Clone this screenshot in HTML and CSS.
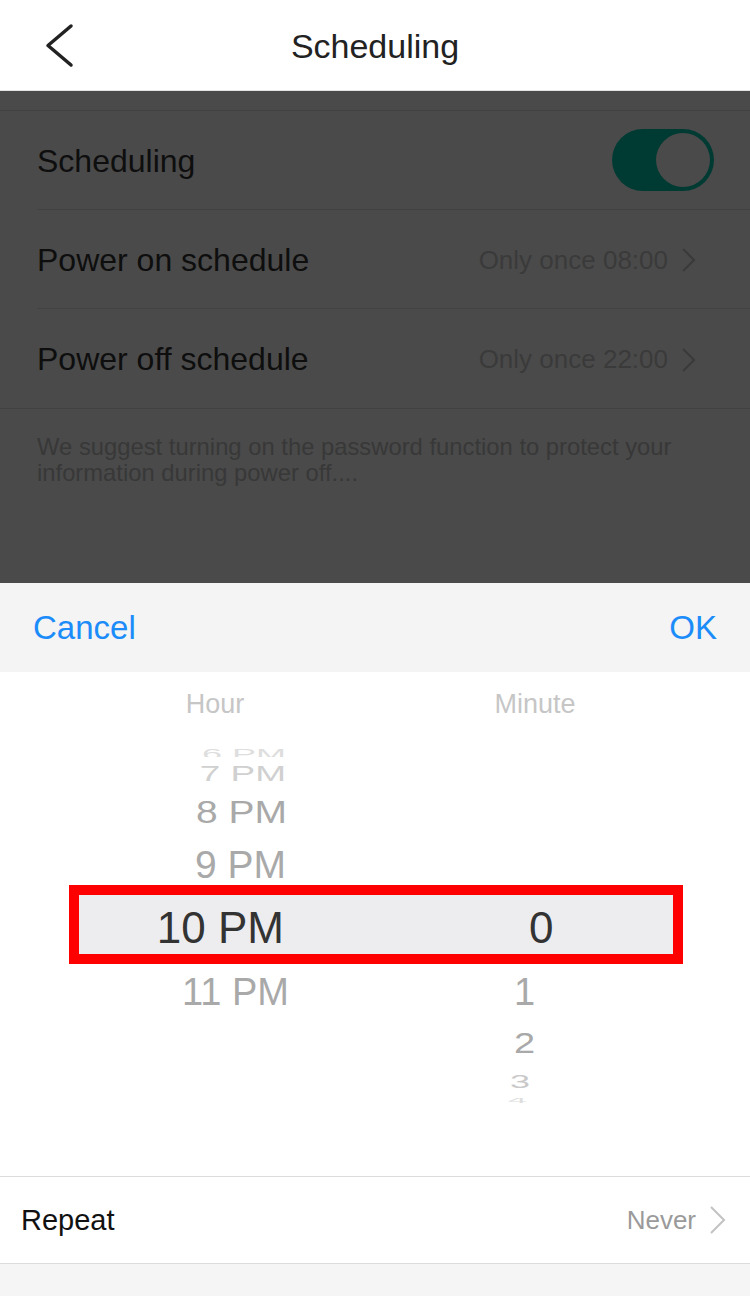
FILE: index.html
```html
<!DOCTYPE html>
<html lang="en">
<head>
  <meta charset="UTF-8" />
  <meta name="viewport" content="width=device-width, initial-scale=1.0"/>
  <title>Scheduling</title>
  <link rel="stylesheet" href="styles.css">
</head>
<body>
  <div class="screen">
    <header class="nav">
      <div class="nav-side">
        <svg class="back" width="32" height="46" viewBox="0 0 32 46">
          <path d="M27 3 L4 22.5 L27 42" fill="none" stroke="#222" stroke-width="3.5" stroke-linecap="round" stroke-linejoin="round"/>
        </svg>
      </div>
      <h1 class="nav-title">Scheduling</h1>
      <div class="nav-side"></div>
    </header>

    <!-- page under the dim layer -->
    <section class="dimmed">
      <div class="list">
        <div class="row">
          <span class="row-label">Scheduling</span>
          <span class="toggle"><span class="knob"></span></span>
        </div>
        <div class="row">
          <span class="row-label">Power on schedule</span>
          <span class="row-value">Only once 08:00
            <svg width="16" height="24" viewBox="0 0 16 24"><path d="M2 1 L13 12 L2 23" fill="none" stroke="#3a3a3a" stroke-width="2"/></svg>
          </span>
        </div>
        <div class="row last">
          <span class="row-label">Power off schedule</span>
          <span class="row-value">Only once 22:00
            <svg width="16" height="24" viewBox="0 0 16 24"><path d="M2 1 L13 12 L2 23" fill="none" stroke="#3a3a3a" stroke-width="2"/></svg>
          </span>
        </div>
      </div>
      <p class="hint">We suggest turning on the password function to protect your information during power off....</p>
    </section>

    <!-- time picker sheet -->
    <section class="sheet">
      <div class="toolbar">
        <button class="tool-btn">Cancel</button>
        <button class="tool-btn">OK</button>
      </div>

      <div class="picker">
        <div class="picker-labels">
          <span>Hour</span>
          <span>Minute</span>
        </div>

        <div class="wheel">
          <div class="wheel-row r6"><span class="h"><i class="sq s6">6 PM</i></span><span class="m"></span></div>
          <div class="wheel-row r7"><span class="h"><i class="sq s7">7 PM</i></span><span class="m"></span></div>
          <div class="wheel-row r8"><span class="h"><i class="sq s8">8 PM</i></span><span class="m"></span></div>
          <div class="wheel-row r9"><span class="h">9 PM</span><span class="m"></span></div>
          <div class="wheel-row selected"><span class="h">10 PM</span><span class="m zero">0</span></div>
          <div class="wheel-row r11"><span class="h">11 PM</span><span class="m">1</span></div>
          <div class="wheel-row r2"><span class="h"></span><span class="m"><i class="sq s2">2</i></span></div>
          <div class="wheel-row r3"><span class="h"></span><span class="m"><i class="sq s3">3</i></span></div>
          <div class="wheel-row r4"><span class="h"></span><span class="m"><i class="sq s4">4</i></span></div>
        </div>
      </div>

      <div class="repeat">
        <span class="repeat-label">Repeat</span>
        <span class="repeat-value">Never
          <svg width="18" height="28" viewBox="0 0 18 28"><path d="M2 1 L15 14 L2 27" fill="none" stroke="#c2c2c2" stroke-width="2"/></svg>
        </span>
      </div>
    </section>
  </div>
</body>
</html>
```

FILE: styles.css
```css
* {
  box-sizing: border-box;
}

body {
  margin: 0;
  font-family: 'Liberation Sans', Arial, sans-serif;
  background: #f5f5f5;
  color: #222;
}

.screen {
  width: 750px;
  height: 1296px;
  overflow: hidden;
  background: #f5f5f5;
}

/* nav bar */
.nav {
  height: 91px;
  background: #fff;
  border-bottom: 1px solid #e2e2e2;
  display: grid;
  grid-template-columns: 1fr auto 1fr;
  align-items: center;
}

.nav-side {
  display: flex;
  align-items: center;
  padding-left: 44px;
}

.back {
  display: block;
  margin-top: 1px;
}

.nav-title {
  margin: 0;
  padding-top: 2px;
  font-size: 34px;
  font-weight: normal;
  color: #222;
}

/* dimmed settings page */
.dimmed {
  height: 492px;
  background: #4a4a4a;
  padding-top: 19px;
}

.list {
  border-top: 1px solid #424242;
  border-bottom: 1px solid #424242;
}

.row {
  height: 99px;
  margin-left: 37px;
  padding-right: 36px;
  border-bottom: 1px solid #424242;
  display: flex;
  align-items: center;
  justify-content: space-between;
}

.row.last {
  border-bottom: none;
}

.row-label {
  font-size: 32px;
  color: #0e0e0e;
  padding-top: 2px;
}

.row-value {
  display: flex;
  align-items: center;
  gap: 13px;
  font-size: 26px;
  color: #3a3a3a;
  margin-right: 17px;
  padding-top: 2px;
}

.toggle {
  width: 102px;
  height: 62px;
  border-radius: 31px;
  background: #003b33;
  display: flex;
  align-items: center;
  justify-content: flex-end;
  padding-right: 4px;
}

.knob {
  width: 54px;
  height: 54px;
  border-radius: 50%;
  background: #4a4a4a;
}

.hint {
  margin: 25px 37px 0;
  font-size: 23.8px;
  line-height: 26px;
  color: #383838;
}

/* sheet */
.sheet {
  background: #fff;
}

.toolbar {
  height: 89px;
  background: #f4f4f4;
  display: flex;
  align-items: center;
  justify-content: space-between;
  padding: 0 33px;
}

.tool-btn {
  border: none;
  background: none;
  padding: 0;
  font-family: inherit;
  font-size: 33px;
  color: #1b8cf9;
}

.picker {
  height: 471px;
  background: #fff;
}

.picker-labels {
  height: 64px;
  display: grid;
  grid-template-columns: 1fr 1fr;
  padding: 1px 55px 0;
  align-items: center;
  text-align: center;
  font-size: 27px;
  color: #c6c6c6;
}

.wheel-row {
  margin: 0 67px 0 69px;
  border-left: 10px solid transparent;
  border-right: 10px solid transparent;
  display: grid;
  grid-template-columns: 297px 297px;
  overflow: hidden;
  color: #a9a9a9;
}

.wheel-row .h {
  text-align: right;
  padding-right: 90px;
}

.wheel-row .m {
  padding-left: 138px;
}

.sq {
  display: inline-block;
  font-style: normal;
}

.r6 { margin-top: 13px; height: 8px; line-height: 8px; font-size: 36px; color: #dedede; }
.s6 { transform: translateY(1px) scaleY(0.4); }
.r7 { height: 33px; line-height: 33px; font-size: 37px; color: #d0d0d0; }
.s7 { transform: scaleY(0.6); }
.r8 { height: 43px; line-height: 43px; font-size: 39px; }
.r8 .h { padding-right: 89px; }
.s8 { transform: scaleY(0.82); }
.r9 { height: 52px; line-height: 40px; padding-top: 12px; font-size: 39px; }

.selected {
  height: 79px;
  border: 10px solid #ff0000;
  background: #ededf0;
  line-height: 53px;
  padding-top: 6px;
  font-size: 44px;
  color: #333;
}

.selected .h {
  padding-right: 92px;
}

.selected .zero {
  padding-left: 153px;
}

.r11 { height: 56px; line-height: 56px; font-size: 38px; }
.r11 .h { padding-right: 87px; }
.r2 { height: 46px; line-height: 46px; font-size: 38px; }
.s2 { transform: scaleY(0.78); }
.r3 { height: 32px; line-height: 32px; font-size: 36px; color: #c9c9c9; }
.r3 .m { padding-left: 134px; }
.s3 { transform: scaleY(0.5); }
.r4 { height: 10px; line-height: 10px; font-size: 34px; color: #dedede; }
.r4 .m { padding-left: 132px; }
.s4 { transform: translateY(-3px) scaleY(0.25); }

/* repeat */
.repeat {
  margin-top: 33px;
  height: 88px;
  background: #fff;
  border-top: 1px solid #dcdcdc;
  border-bottom: 1px solid #dcdcdc;
  display: flex;
  align-items: center;
  justify-content: space-between;
  padding: 0 23px 0 21px;
}

.repeat-label {
  font-size: 29px;
  color: #111;
}

.repeat-value {
  display: flex;
  align-items: center;
  gap: 13px;
  font-size: 26px;
  color: #9a9a9a;
}
```
